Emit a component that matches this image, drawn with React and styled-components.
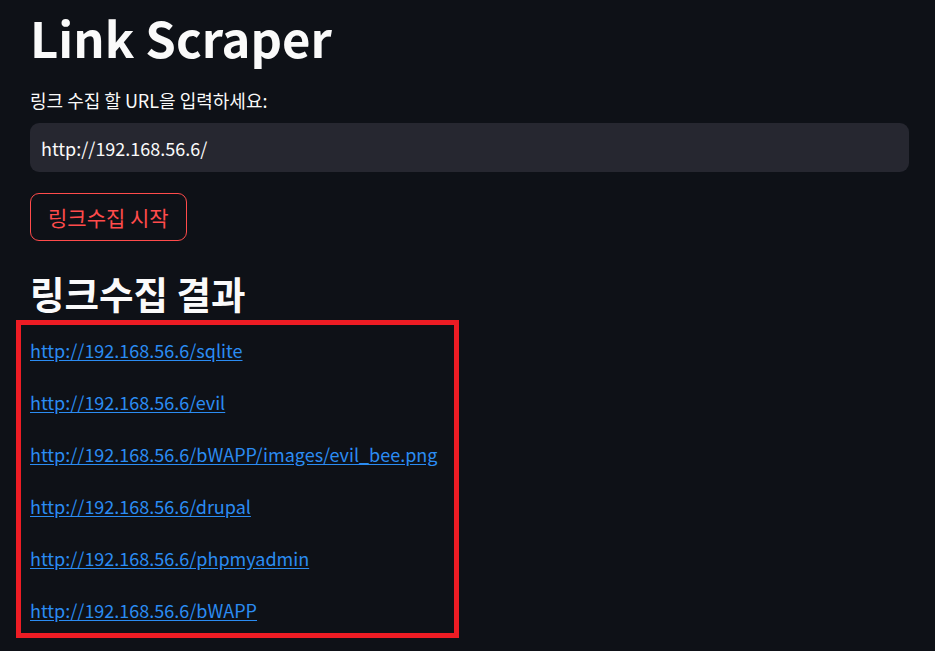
import styled, { createGlobalStyle } from 'styled-components'

const GlobalStyle = createGlobalStyle`
  body {
    margin: 0;
    background: #0e1117;
    color: #fafafa;
    font-family: "Noto Sans CJK KR", "Noto Sans", sans-serif;
  }
`

const Page = styled.main`
  display: flex;
  flex-direction: column;
  align-items: flex-start;
  padding: 0 26px 0 30px;
  min-height: 651px;
  box-sizing: border-box;
`

const Title = styled.h1`
  margin: 0;
  padding-top: 4px;
  font-size: 49px;
  font-weight: 700;
  line-height: 66px;
`

const Label = styled.label`
  margin-top: 18px;
  font-size: 18px;
  line-height: 24px;
`

const Input = styled.input`
  margin-top: 11px;
  width: 100%;
  height: 49px;
  box-sizing: border-box;
  border: none;
  border-radius: 9px;
  background: #262730;
  color: #fafafa;
  padding: 0 11px;
  font-family: inherit;
  font-size: 18px;
  outline: none;
`

const Button = styled.button`
  margin-top: 21px;
  height: 48px;
  padding: 0 17px;
  border: 1px solid #ff4b4b;
  border-radius: 9px;
  background: transparent;
  color: #ff4b4b;
  font-family: inherit;
  font-size: 21px;
`

const Heading = styled.h2`
  margin: 27px 0 0;
  font-size: 37.5px;
  font-weight: 700;
  line-height: 50px;
`

const ResultBox = styled.section`
  margin: 2px 0 0 -14px;
  width: 443px;
  height: 318px;
  box-sizing: border-box;
  border: 5px solid #ed1c24;
  padding: 12px 9px;
  display: flex;
  flex-direction: column;
  gap: 26px;
`

const LinkItem = styled.a`
  color: #2b8cf2;
  font-size: 18px;
  line-height: 26px;
  text-decoration: underline;
  text-underline-offset: 2px;
  align-self: flex-start;
`

const links = [
  'http://192.168.56.6/sqlite',
  'http://192.168.56.6/evil',
  'http://192.168.56.6/bWAPP/images/evil_bee.png',
  'http://192.168.56.6/drupal',
  'http://192.168.56.6/phpmyadmin',
  'http://192.168.56.6/bWAPP',
]

export default function App() {
  return (
    <>
      <GlobalStyle />
      <Page>
        <Title>Link Scraper</Title>
        <Label>링크 수집 할 URL을 입력하세요:</Label>
        <Input defaultValue="http://192.168.56.6/" />
        <Button>링크수집 시작</Button>
        <Heading>링크수집 결과</Heading>
        <ResultBox>
          {links.map((href) => (
            <LinkItem key={href} href={href}>{href}</LinkItem>
          ))}
        </ResultBox>
      </Page>
    </>
  )
}
